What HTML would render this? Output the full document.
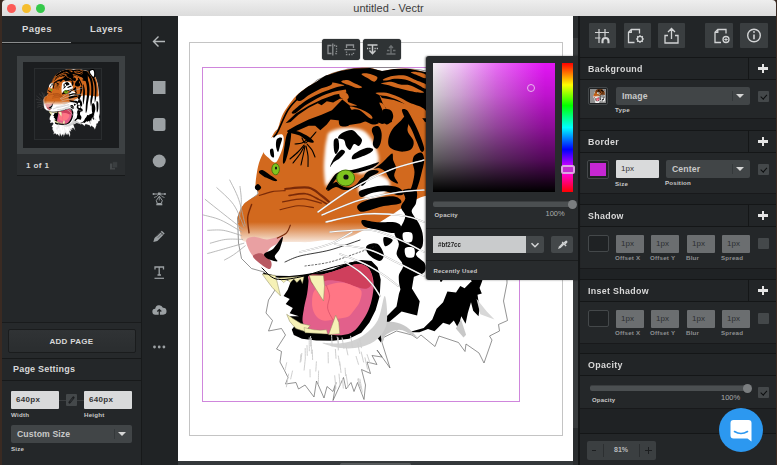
<!DOCTYPE html>
<html>
<head>
<meta charset="utf-8">
<title>untitled - Vectr</title>
<style>
*{box-sizing:border-box;margin:0;padding:0}
html,body{width:777px;height:465px;overflow:hidden;background:#2a2320;font-family:"Liberation Sans",sans-serif;}
#app{position:absolute;left:0;top:0;width:777px;height:465px;overflow:hidden;background:#3a2a22}
.abs{position:absolute}
#titlebar{left:2px;top:0;width:774px;height:16px;background:linear-gradient(#eeeeee,#dcdcdc);border-radius:4px 4px 0 0}
#title{left:0;top:0;width:777px;height:16px;line-height:16px;text-align:center;font-size:11px;color:#3c3c3c}
.tl{width:9px;height:9px;border-radius:50%;top:3.5px}
#left{left:2px;top:16px;width:139px;height:449px;background:#242729}
#tools{left:141px;top:16px;width:36.5px;height:449px;background:#202325;border-left:1.5px solid #17191a}
#canvas{left:177.500px;top:16px;width:395.500px;height:446px;background:#fff;overflow:hidden}
#vscroll{left:573px;top:16px;width:5px;height:449px;background:#2a2d2f}
#hscroll{left:178px;top:460.5px;width:395px;height:4.5px;background:#34383a}
#right{left:580px;top:16px;width:196px;height:449px;background:#1f2224}
.t{color:#d8d8d8;font-weight:bold;white-space:nowrap;position:absolute}
.lbl{color:#c8c8c8;font-weight:bold;font-size:6.2px;white-space:nowrap;position:absolute;letter-spacing:.2px;margin-top:-1px}
.hdr{left:0;width:196px;height:23px;background:#222527;border-top:1px solid #141617;border-bottom:1px solid #141617}
.hdr .t{left:8px;top:5px;font-size:9.5px;letter-spacing:.35px;transform:scaleX(.93);transform-origin:0 50%}
.hdr .sep{position:absolute;left:168px;top:0;width:1px;height:21px;background:#141617}
.hdr .plus{position:absolute;left:178px;top:5.5px;width:9.5px;height:9.5px}
.hdr .plus:before{content:"";position:absolute;left:0;top:3.5px;width:9.5px;height:2.5px;background:#e4e4e4}
.hdr .plus:after{content:"";position:absolute;left:3.5px;top:0;width:2.5px;height:9.5px;background:#e4e4e4}
.body{left:0;width:196px;background:#242729;border-bottom:1px solid #18191b}
.inp{background:#d9dadb;border-radius:1px;color:#333;font-size:8px;line-height:18px;padding-left:5px;font-weight:normal}
.inp.dis{background:#6b6e70;color:#2c2e30}
.sel{background:#414547;border-radius:2px;color:#c9c9c9;font-size:8.7px;font-weight:bold;line-height:18px;padding-left:6px;letter-spacing:.1px}
.sel:after{content:"";position:absolute;right:6px;top:7px;border:4px solid transparent;border-top:4.5px solid #d6d6d6;border-bottom:0}
.sel:before{content:"";position:absolute;right:17px;top:4px;width:1px;height:10px;background:#34383a}
.chk{width:11px;height:11px;background:#44484a;border-radius:1px}
.chk.on:after{content:"";position:absolute;left:3.8px;top:2px;width:2.6px;height:4.6px;border:solid #0c0e0f;border-width:0 1.8px 1.8px 0;transform:rotate(42deg)}
.sw{border:1.5px solid #44484a;border-radius:2px;background:#1f2224}
.tbtn{top:7px;width:27.5px;height:25px;background:#3a3e40;border-radius:1px}

.ftb{width:38px;height:21px;background:#2f3335;border-radius:3px;box-shadow:0 0 1px #1a1c1d}
#popup{z-index:5;left:425.5px;top:55.5px;width:154.5px;height:224.5px;background:#282b2d;border-radius:3px 0 0 3px;box-shadow:-1px 0 2px rgba(0,0,0,.5)}
#sv{left:7px;top:7.5px;width:122px;height:129px;background:linear-gradient(to top,#000 0%,rgba(0,0,0,.64) 25%,rgba(0,0,0,.38) 50%,rgba(0,0,0,.16) 75%,rgba(0,0,0,0) 100%),linear-gradient(to right,#f4f0f4 0%,#f1bff7 22%,#ea6cf6 52%,#e316f5 92%)}
#hue{left:136.5px;top:7.5px;width:10.6px;height:129px;background:linear-gradient(to bottom,#f00 0%,#ff0 17%,#0f0 33%,#0ff 50%,#00f 67%,#f0f 83%,#f00 100%)}
</style>
</head>
<body>
<div id="app">
  <div id="titlebar" class="abs"></div>
  <div id="title" class="abs">untitled - Vectr</div>
  <div class="abs tl" style="left:6.5px;background:#fc5b57"></div>
  <div class="abs tl" style="left:21.5px;background:#f5bd2e"></div>
  <div class="abs tl" style="left:35.5px;background:#35c94a"></div>

  <!-- LEFT PANEL -->
  <div id="left" class="abs">
    <div class="t" style="left:20px;top:7px;font-size:9.5px;letter-spacing:.4px">Pages</div>
    <div class="t" style="left:88px;top:7px;font-size:9.5px;letter-spacing:.4px">Layers</div>
    <div class="abs" style="left:0;top:26px;width:139px;height:2px;background:#17191a"></div>
    <div class="abs" style="left:0;top:26px;width:69px;height:1px;background:#8a8c8d"></div>
    <!-- thumbnail -->
    <div class="abs" style="left:15px;top:40px;width:108px;height:98px;background:#3d4143"></div>
    <div class="abs" style="left:21px;top:46px;width:96px;height:86px;background:#1b1d1f"></div>
    <div class="abs" style="left:32px;top:52px;width:68px;height:72px;border:1px solid #2a2d2f;background:#1d1f21"></div>
    <svg class="abs" style="left:0;top:0" width="139" height="160" viewBox="2 16 139 160"><use href="#tg" transform="translate(-6.050 55.560) scale(.2086 .2036)"/></svg>
    <div class="abs" style="left:15px;top:138px;width:108px;height:22px;background:#2a2d2f;border-bottom:1px solid #17191a"></div>
    <div class="t" style="left:24px;top:145px;font-size:8px;letter-spacing:.4px">1 of 1</div>
    <svg class="abs" style="left:107px;top:145px" width="10" height="10" viewBox="0 0 10 10"><rect x="1" y="2.500" width="5" height="6" fill="#45494b"/><rect x="3.500" y=".800" width="5" height="6" fill="#3a3e40" stroke="#2b2e30" stroke-width=".600"/></svg>
    <!-- add page -->
    <div class="abs" style="left:0;top:305.500px;width:139px;height:1px;background:#191b1c"></div>
    <div class="abs" style="left:0;top:306.500px;width:139px;height:36px;background:#26292b"></div>
    <div class="abs" style="left:5.500px;top:313px;width:128px;height:24px;background:linear-gradient(#303335,#2a2d2f);border:1px solid #1a1c1d;border-radius:2px"></div>
    <div class="t" style="left:0;top:320.500px;width:139px;text-align:center;font-size:8px;letter-spacing:.3px">ADD PAGE</div>
    <div class="abs" style="left:0;top:342px;width:139px;height:1px;background:#17191a"></div>
    <div class="t" style="left:11px;top:348px;font-size:9px;letter-spacing:.2px">Page Settings</div>
    <div class="abs" style="left:0;top:364px;width:139px;height:1px;background:#17191a"></div>
    <div class="abs inp" style="left:9px;top:375px;width:48px;height:18px;font-weight:bold;font-size:8px;letter-spacing:.3px">640px</div>
    <div class="abs inp" style="left:82px;top:375px;width:48px;height:18px;font-weight:bold;font-size:8px;letter-spacing:.3px">640px</div>
    <div class="abs" style="left:57px;top:384px;width:25px;height:1px;background:#3a3d3f"></div>
    <div class="abs" style="left:64px;top:378px;width:11px;height:12px;background:#44484a;border-radius:1px"></div>
    <svg class="abs" style="left:64px;top:378px" width="11" height="12" viewBox="0 0 11 12"><path d="M3.500 8.500l4-5" stroke="#1c1e20" stroke-width="2.200" stroke-linecap="round" fill="none"/><path d="M4.200 7.600l2.600-3.200" stroke="#44484a" stroke-width=".700" fill="none"/></svg>
    <div class="lbl" style="left:9px;top:396px">Width</div>
    <div class="lbl" style="left:82px;top:396px">Height</div>
    <div class="abs sel" style="left:9px;top:409px;width:121px;height:18px">Custom Size</div>
    <div class="lbl" style="left:9px;top:430px">Size</div>
  </div>

  <!-- TOOLS -->
  <div id="tools" class="abs">
    <svg class="abs" style="left:-1.500px;top:0" width="37" height="449" viewBox="141 16 37 449" fill="none" stroke="#9ca1a4" stroke-width="1.300">
      <path d="M165 41.500h-11.500M158.500 36.500l-5 5 5 5" stroke-width="1.400" stroke="#b4b8ba"/>
      <rect x="153" y="81" width="12.500" height="13" fill="#9ca1a4" stroke="none"/>
      <rect x="153" y="118" width="12.500" height="13" rx="2.500" fill="#9ca1a4" stroke="none"/>
      <circle cx="159.200" cy="161" r="6.500" fill="#9ca1a4" stroke="none"/>
      <!-- pen tool -->
      <path d="M153.500 194h11.500" stroke-width="1"/><circle cx="153.500" cy="194" r="1" fill="#9ca1a4" stroke="none"/><circle cx="165" cy="194" r="1" fill="#9ca1a4" stroke="none"/><rect x="158" y="192.500" width="2.600" height="2.600" fill="#9ca1a4" stroke="none"/>
      <path d="M154 197.500q3-.5 4.500-3M164.500 197.500q-3-.5-4.500-3" stroke-width=".8"/>
      <path d="M159.300 196.200l3 4.300-1 3h-4l-1-3z" stroke-width="1"/><path d="M159.300 197v3.500" stroke-width=".8"/><rect x="156.300" y="203.500" width="6" height="1.800" fill="#9ca1a4" stroke="none"/>
      <!-- pencil -->
      <path d="M153.300 242l1.200-4 7.300-7.300 2.900 2.900-7.300 7.300z" fill="#9ca1a4" stroke="none"/><path d="M160.500 232l2.800 2.800" stroke="#1e2123" stroke-width=".9"/><path d="M156.500 236.500l4.500-4.500M157.800 237.800l4.500-4.500" stroke="#1e2123" stroke-width=".5"/>
      <!-- text -->
      <path d="M155 269.500v-2.500h8.500v2.500M159.200 267v8M157.500 275h3.500" stroke-width="1.300"/><path d="M154.500 278.300h9.500" stroke-width="1.200"/>
      <!-- cloud upload -->
      <g transform="translate(0 -.8)"><path d="M156 315.500h-.5a3 3 0 0 1-.3-6 4 4 0 0 1 7.700-1 3.500 3.500 0 0 1 .3 7h-.7z" fill="#9ca1a4" stroke="none"/><path d="M159.300 316v-5M157.300 312.300l2-2 2 2" stroke="#1e2123" stroke-width="1.200"/></g>
      <!-- dots -->
      <circle cx="154.500" cy="347" r="1.400" fill="#9ca1a4" stroke="none"/><circle cx="159.200" cy="347" r="1.400" fill="#9ca1a4" stroke="none"/><circle cx="163.900" cy="347" r="1.400" fill="#9ca1a4" stroke="none"/>
    </svg>
  </div>

  <!-- CANVAS -->
  <div id="canvas" class="abs">
    <div class="abs" style="left:11.500px;top:26px;width:374px;height:394px;border:1px solid #c4c4c4"></div>
    <div class="abs" style="left:24.500px;top:51px;width:318px;height:335px;border:1px solid #cf86dc"></div>
<svg class="abs" style="left:-177.500px;top:-16px" width="777" height="465" viewBox="0 0 777 465">
<defs>
<linearGradient id="gor" gradientUnits="userSpaceOnUse" x1="0" y1="222" x2="0" y2="246"><stop offset="0" stop-color="#d2691e"/><stop offset="1" stop-color="#fff"/></linearGradient>
<filter id="bl1" x="-20%" y="-20%" width="140%" height="140%"><feGaussianBlur stdDeviation="1.6"/></filter>
<filter id="bl2" x="-20%" y="-20%" width="140%" height="140%"><feGaussianBlur stdDeviation="0.5"/></filter>
</defs>
<g id="tg">
<path fill="#fff" stroke="#666" stroke-width="0.7" stroke-linejoin="round" d="M268.0 148.0 L279.0 145.0 L283.0 127.0 L292.0 106.0 L305.0 91.0 L317.0 80.0 L333.0 73.0 L348.0 69.0 L369.0 67.5 L395.0 67.5 L421.0 70.0 L450.0 76.0 L470.0 88.0 L488.0 108.0 L498.0 140.0 L503.0 180.0 L506.0 230.0 L507.0 283.0 L503.5 301.0 L507.5 320.5 L498.5 324.5 L499.5 331.0 L489.5 336.0 L492.0 340.0 L484.0 363.0 L479.0 353.0 L466.0 344.0 L465.0 351.5 L458.5 342.5 L439.0 336.0 L435.0 346.5 L421.0 335.0 L417.0 338.5 L412.0 335.0 L396.5 331.0 L383.5 337.5 L382.0 342.5 L390.0 368.0 L377.0 350.0 L382.0 357.0 L372.0 355.5 L377.0 364.5 L367.0 362.0 L370.5 373.5 L361.5 369.5 L365.5 385.0 L364.0 399.5 L357.5 382.5 L354.0 391.5 L351.0 382.5 L346.0 389.0 L343.5 377.5 L333.0 400.5 L336.0 382.5 L333.0 391.5 L327.0 386.5 L324.0 398.0 L316.5 381.0 L314.0 397.0 L305.0 385.0 L298.5 389.0 L296.0 382.5 L285.5 384.0 L288.0 377.5 L284.0 369.5 L280.0 362.0 L281.5 351.5 L276.5 349.0 L285.5 335.0 L281.5 328.5 L268.5 331.0 L272.5 320.5 L266.0 313.0 L268.5 300.0 L275.0 290.0 L264.0 272.0 L251.5 268.5 L241.5 258.5 L238.5 243.0 L237.5 217.5 L244.0 204.5 L258.0 194.0 L257.0 187.5 L258.5 173.5 L262.0 160.0Z"/>
<path fill="url(#gor)" d="M278.0 128.0 C279.3 125.2 280.3 119.7 282.0 116.0 C283.7 112.3 285.7 109.3 288.0 106.0 C290.3 102.7 293.0 99.0 296.0 96.0 C299.0 93.0 302.7 90.3 306.0 88.0 C309.3 85.7 312.3 84.2 316.0 82.0 C319.7 79.8 324.0 76.8 328.0 75.0 C332.0 73.2 335.7 72.1 340.0 71.0 C344.3 69.9 349.0 68.9 354.0 68.4 C359.0 67.9 365.3 67.6 370.0 68.0 C374.7 68.4 378.0 70.8 382.0 71.0 C386.0 71.2 389.3 69.3 394.0 69.0 C398.7 68.7 404.8 68.5 410.0 69.0 C415.2 69.5 418.3 70.7 425.0 72.0 C431.7 73.3 442.5 74.2 450.0 77.0 C457.5 79.8 463.8 83.7 470.0 89.0 C476.2 94.3 482.7 100.5 487.0 109.0 C491.3 117.5 493.8 128.2 496.0 140.0 C498.2 151.8 499.3 170.0 500.0 180.0 C500.7 190.0 505.0 197.2 500.0 200.0 C495.0 202.8 479.2 197.7 470.0 197.0 C460.8 196.3 452.5 196.2 445.0 196.0 C437.5 195.8 430.8 194.8 425.0 196.0 C419.2 197.2 414.8 200.3 410.0 203.0 C405.2 205.7 400.2 209.3 396.0 212.0 C391.8 214.7 388.5 216.8 385.0 219.0 C381.5 221.2 378.8 223.0 375.0 225.0 C371.2 227.0 365.8 229.2 362.0 231.0 C358.2 232.8 356.0 234.5 352.0 236.0 C348.0 237.5 342.5 239.3 338.0 240.0 C333.5 240.7 329.7 239.7 325.0 240.0 C320.3 240.3 314.8 241.7 310.0 242.0 C305.2 242.3 300.5 242.0 296.0 242.0 C291.5 242.0 291.3 242.0 283.0 242.0 C274.7 242.0 253.2 243.7 246.0 242.0 C238.8 240.3 241.3 236.2 240.0 232.0 C238.7 227.8 237.3 221.7 238.0 217.0 C238.7 212.3 240.7 207.8 244.0 204.0 C247.3 200.2 256.1 196.8 258.0 194.0 C259.9 191.2 255.7 190.7 255.5 187.0 C255.3 183.3 256.2 176.5 257.0 172.0 C257.8 167.5 258.4 164.2 260.0 160.0 C261.6 155.8 264.2 151.5 266.5 147.0 C268.8 142.5 272.1 136.2 274.0 133.0 C275.9 129.8 276.7 130.8 278.0 128.0Z"/>
<path fill="#fff" filter="url(#bl1)" d="M330.0 132.0 C332.8 130.3 338.7 128.3 344.0 128.0 C349.3 127.7 357.3 128.0 362.0 130.0 C366.7 132.0 369.3 136.0 372.0 140.0 C374.7 144.0 377.0 150.2 378.0 154.0 C379.0 157.8 379.0 160.3 378.0 163.0 C377.0 165.7 374.7 168.2 372.0 170.0 C369.3 171.8 365.0 173.7 362.0 174.0 C359.0 174.3 358.0 172.0 354.0 172.0 C350.0 172.0 342.0 172.3 338.0 174.0 C334.0 175.7 332.0 180.0 330.0 182.0 C328.0 184.0 327.0 188.0 326.0 186.0 C325.0 184.0 324.2 176.0 324.0 170.0 C323.8 164.0 324.5 155.3 325.0 150.0 C325.5 144.7 326.2 141.0 327.0 138.0 C327.8 135.0 327.2 133.7 330.0 132.0Z"/>
<path fill="#fff" filter="url(#bl1)" d="M362.0 180.0 C364.7 177.7 370.0 174.3 374.0 174.0 C378.0 173.7 383.3 176.0 386.0 178.0 C388.7 180.0 390.7 183.0 390.0 186.0 C389.3 189.0 385.3 193.7 382.0 196.0 C378.7 198.3 373.3 200.0 370.0 200.0 C366.7 200.0 364.0 198.0 362.0 196.0 C360.0 194.0 358.0 190.7 358.0 188.0 C358.0 185.3 359.3 182.3 362.0 180.0Z"/>
<path fill="#fff" filter="url(#bl2)" d="M271.7 137.4 C274.3 135.9 280.4 133.2 282.3 134.5 C284.2 135.8 284.0 141.1 283.3 145.2 C282.6 149.2 279.8 155.9 278.4 158.8 C276.9 161.7 276.2 162.6 274.6 162.5 C273.0 162.4 270.7 159.8 268.8 158.0 C266.9 156.2 263.9 154.4 263.5 152.0 C263.1 149.6 265.1 145.7 266.5 143.3 C267.9 140.9 269.1 138.9 271.7 137.4Z"/>
<path fill="#000" d="M328.0 75.0 L340.0 71.0 L354.0 68.4 L370.0 68.0 L382.0 71.0 L394.0 69.0 L410.0 69.0 L425.0 72.0 L450.0 78.0 L450.0 128.0 L425.0 122.0 L418.0 112.0 L408.0 105.0 L394.0 100.0 L382.0 98.0 L379.0 94.0 L383.0 104.0 L390.0 114.0 L392.0 122.0 L382.0 124.0 L372.0 120.0 L364.0 112.0 L356.0 105.0 L348.0 102.0 L347.0 97.0 L346.0 90.0 L344.0 85.0 L336.0 83.0 L330.0 82.0Z"/>
<path fill="#000" d="M296.0 97.0 C297.0 94.8 302.7 90.5 306.0 88.0 C309.3 85.5 312.3 84.2 316.0 82.0 C319.7 79.8 325.3 74.7 328.0 75.0 C330.7 75.3 333.3 81.7 332.0 84.0 C330.7 86.3 323.8 87.2 320.0 89.0 C316.2 90.8 312.3 93.0 309.0 95.0 C305.7 97.0 302.2 100.7 300.0 101.0 C297.8 101.3 295.0 99.2 296.0 97.0Z"/>
<path fill="none" stroke="#000" stroke-width="1.6" stroke-linecap="round" d="M273.9 136.8 C274.5 135.9 275.4 136.1 277.7 131.6 C280.1 127.1 284.4 115.5 288.1 109.7 C291.7 103.9 295.6 100.4 299.7 96.8 C303.8 93.1 308.9 90.1 312.6 87.7 C316.2 85.4 319.2 83.9 321.6 82.6 C324.0 81.3 325.9 80.4 326.8 80.0"/>
<path fill="#000" d="M291.9 112.3 C293.0 110.6 298.4 106.0 302.3 103.2 C306.1 100.4 310.9 97.6 315.2 95.5 C319.5 93.3 324.4 91.7 328.1 90.3 C331.7 88.9 333.9 88.0 337.1 87.1 C340.3 86.2 345.7 84.8 347.4 85.2 C349.1 85.5 349.1 88.1 347.4 89.0 C345.7 90.0 340.3 90.2 337.1 91.0 C333.9 91.7 331.5 92.3 328.1 93.5 C324.6 94.8 320.3 96.7 316.5 98.7 C312.6 100.8 308.3 103.4 304.8 105.8 C301.4 108.2 298.0 111.8 295.8 112.9 C293.7 114.0 290.9 113.9 291.9 112.3Z"/>
<path fill="#000" d="M285.5 123.2 L295.8 113.5 L308.7 105.8 L321.6 99.4 L334.5 94.8 L348.7 92.3 L350.0 97.4 L339.7 98.7 L333.2 102.6 L326.8 101.3 L321.6 105.2 L317.7 103.2 L308.7 107.7 L298.4 114.8 L290.6 121.9Z"/>
<path fill="#000" d="M342.3 99.4 L331.9 110.3 L321.6 114.8 L308.7 119.4 L295.8 125.8 L286.8 131.0 L289.4 133.5 L298.4 130.3 L308.7 125.8 L315.2 125.8 L320.3 130.3 L326.8 124.5 L330.6 119.4 L339.7 120.6 L347.4 125.2 L360.3 123.2 L370.0 119.4 L370.0 105.8 L350.0 105.8Z"/>
<path fill="#d2691e" d="M350.0 106.5 C351.1 105.9 357.0 107.7 360.3 109.0 C363.7 110.3 368.1 112.6 370.0 114.2 C371.9 115.8 373.5 118.2 371.9 118.7 C370.3 119.2 363.3 118.5 360.3 117.4 C357.3 116.3 355.6 114.1 353.9 112.3 C352.2 110.4 348.9 107.0 350.0 106.5Z"/>
<path fill="#000" d="M289.4 129.7 C290.6 129.5 295.2 130.4 298.4 131.6 C301.6 132.8 306.1 135.1 308.7 136.8 C311.3 138.5 313.9 141.1 313.9 141.9 C313.9 142.8 311.1 143.0 308.7 141.9 C306.3 140.9 302.7 137.0 299.7 135.5 C296.7 134.0 292.4 133.9 290.6 132.9 C288.9 131.9 288.1 129.9 289.4 129.7Z"/>
<path fill="#d2691e" d="M341.2 81.7 C340.8 80.9 344.8 79.8 347.0 80.0 C349.1 80.2 351.4 81.7 353.9 82.9 C356.5 84.1 361.5 86.1 362.1 87.0 C362.6 87.8 359.6 88.4 357.4 88.1 C355.3 87.8 352.0 86.3 349.3 85.2 C346.6 84.2 341.5 82.6 341.2 81.7Z"/>
<path fill="#d2691e" d="M361.5 74.2 C361.5 73.4 365.3 73.1 367.9 73.6 C370.5 74.1 376.1 75.7 377.2 77.1 C378.2 78.5 375.8 81.6 374.3 81.7 C372.7 81.9 370.0 79.5 367.9 78.3 C365.7 77.0 361.5 75.0 361.5 74.2Z"/>
<path fill="#d2691e" d="M340.0 91.6 C341.2 91.0 345.5 92.3 347.0 93.4 C348.4 94.4 349.1 97.0 348.7 98.0 C348.3 99.0 346.1 99.4 344.6 99.2 C343.2 99.0 340.8 98.1 340.0 96.8 C339.2 95.6 338.8 92.2 340.0 91.6Z"/>
<path fill="#d2691e" d="M383.0 79.4 C383.9 78.6 388.6 76.6 392.3 75.9 C395.9 75.3 401.4 74.8 405.0 75.4 C408.7 75.9 410.9 78.0 414.3 79.4 C417.7 80.9 423.5 82.5 425.4 84.1 C427.2 85.6 427.0 88.8 425.4 88.7 C423.7 88.6 418.9 85.0 415.5 83.5 C412.1 81.9 408.5 80.2 405.0 79.4 C401.6 78.6 397.7 78.6 394.6 78.8 C391.5 79.0 388.4 80.5 386.5 80.6 C384.5 80.7 382.0 80.2 383.0 79.4Z"/>
<path fill="#d2691e" d="M381.2 83.5 C381.6 82.9 387.9 81.6 391.1 81.7 C394.3 81.9 397.3 84.1 400.4 84.6 C403.5 85.2 405.9 84.1 409.7 85.2 C413.5 86.4 421.1 90.4 423.0 91.6 C425.0 92.9 423.5 92.9 421.3 92.8 C419.1 92.7 413.6 91.8 409.7 91.0 C405.8 90.3 401.6 89.1 398.1 88.1 C394.6 87.2 391.6 86.0 388.8 85.2 C386.0 84.5 380.8 84.1 381.2 83.5Z"/>
<path fill="#d2691e" d="M410.8 72.5 C410.7 71.9 414.2 71.6 416.7 71.9 C419.1 72.2 423.9 73.1 425.4 74.2 C426.8 75.3 426.6 78.1 425.4 78.3 C424.1 78.5 420.2 76.3 417.8 75.4 C415.4 74.4 411.0 73.0 410.8 72.5Z"/>
<path fill="#d2691e" d="M376.0 92.8 C377.2 92.4 382.8 92.1 386.5 92.8 C390.1 93.5 394.2 95.2 398.1 96.8 C401.9 98.5 405.4 100.7 409.7 102.7 C413.9 104.6 420.5 105.9 423.6 108.5 C426.7 111.0 430.2 116.5 428.3 117.7 C426.3 119.0 415.1 117.6 412.0 116.0 C408.9 114.5 411.6 110.9 409.7 108.5 C407.8 106.0 403.9 103.4 400.4 101.5 C396.9 99.6 392.3 97.9 388.8 96.8 C385.3 95.8 381.6 95.8 379.5 95.1 C377.4 94.4 374.8 93.2 376.0 92.8Z"/>
<path fill="#d2691e" d="M379.5 102.7 C379.9 102.1 383.0 103.6 384.1 105.0 C385.3 106.3 385.9 108.9 386.5 110.8 C387.0 112.6 388.0 115.1 387.6 116.0 C387.2 116.9 385.1 117.3 384.1 116.0 C383.2 114.7 382.6 110.7 381.8 108.5 C381.0 106.2 379.1 103.2 379.5 102.7Z"/>
<path fill="#d2691e" d="M398.7 108.5 C398.8 107.6 400.5 109.5 401.6 110.8 C402.6 112.0 405.2 115.1 405.0 116.0 C404.8 116.9 401.5 117.3 400.4 116.0 C399.3 114.7 398.5 109.3 398.7 108.5Z"/>
<path fill="#000" d="M340.0 116.8 C341.6 115.2 347.7 116.9 349.7 115.8 C351.6 114.7 350.0 111.0 351.6 110.0 C353.2 109.0 356.5 108.7 359.4 110.0 C362.3 111.3 365.8 115.6 369.0 117.7 C372.3 119.8 378.1 121.5 378.7 122.6 C379.4 123.7 375.8 125.0 372.9 124.5 C370.0 124.0 364.8 120.8 361.3 119.7 C357.7 118.5 353.7 116.8 351.6 117.7 C349.5 118.7 350.6 124.2 348.7 125.5 C346.8 126.8 341.5 126.9 340.0 125.5 C338.5 124.0 338.4 118.4 340.0 116.8Z"/>
<path fill="#000" d="M372.9 127.4 C374.0 126.6 377.3 125.5 378.7 126.5 C380.2 127.4 381.3 130.5 381.6 133.2 C381.9 136.0 381.4 140.3 380.6 142.9 C379.8 145.5 378.1 148.4 376.8 148.7 C375.5 149.0 373.4 146.8 372.9 144.8 C372.4 142.9 374.0 139.4 373.9 137.1 C373.7 134.8 372.1 132.9 371.9 131.3 C371.8 129.7 371.8 128.2 372.9 127.4Z"/>
<path fill="#000" d="M392.3 129.4 C394.2 126.5 397.7 123.9 400.0 121.6 C402.3 119.4 404.4 115.8 405.8 115.8 C407.3 115.8 408.4 119.0 408.7 121.6 C409.0 124.2 406.9 128.1 407.7 131.3 C408.5 134.5 412.9 138.1 413.5 141.0 C414.2 143.9 413.2 146.9 411.6 148.7 C410.0 150.5 406.4 151.3 403.9 151.6 C401.3 151.9 398.5 151.4 396.1 150.6 C393.7 149.8 390.6 148.7 389.4 146.8 C388.1 144.8 387.9 141.9 388.4 139.0 C388.9 136.1 390.3 132.3 392.3 129.4Z"/>
<path fill="#000" d="M401.9 110.0 C402.1 108.4 405.2 108.7 406.8 110.0 C408.4 111.3 409.8 114.5 411.6 117.7 C413.4 121.0 415.8 125.8 417.4 129.4 C419.0 132.9 420.2 135.8 421.3 139.0 C422.4 142.3 424.2 146.6 424.2 148.7 C424.2 150.8 422.6 152.9 421.3 151.6 C420.0 150.3 418.1 144.7 416.4 141.0 C414.8 137.3 413.4 132.9 411.6 129.4 C409.8 125.8 407.4 122.9 405.8 119.7 C404.2 116.5 401.8 111.6 401.9 110.0Z"/>
<path fill="#000" d="M382.6 110.0 C383.7 108.4 388.5 109.0 390.3 110.0 C392.1 111.0 393.1 113.9 393.2 115.8 C393.4 117.7 392.4 120.2 391.3 121.6 C390.2 123.1 387.7 124.8 386.4 124.5 C385.2 124.2 384.2 122.1 383.5 119.7 C382.9 117.3 381.4 111.6 382.6 110.0Z"/>
<path fill="#000" d="M414.5 155.5 C416.0 153.9 419.7 151.8 421.3 152.6 C422.9 153.4 424.2 156.8 424.2 160.3 C424.2 163.9 422.4 169.4 421.3 173.9 C420.2 178.4 418.7 183.9 417.4 187.4 C416.1 191.0 414.8 194.2 413.5 195.2 C412.3 196.1 409.8 195.2 409.7 193.2 C409.5 191.3 411.8 187.1 412.6 183.5 C413.4 180.0 414.5 175.5 414.5 171.9 C414.5 168.4 412.6 165.0 412.6 162.3 C412.6 159.5 413.1 157.1 414.5 155.5Z"/>
<path fill="#000" d="M386.4 158.4 C388.2 156.8 391.1 153.2 392.3 153.5 C393.4 153.9 392.6 157.9 393.2 160.3 C393.9 162.7 396.0 165.5 396.1 168.1 C396.3 170.6 393.9 173.2 394.2 175.8 C394.5 178.4 398.7 182.9 398.1 183.5 C397.4 184.2 392.4 181.6 390.3 179.7 C388.2 177.7 387.4 173.9 385.5 171.9 C383.5 170.0 380.6 168.5 378.7 168.1 C376.8 167.6 373.4 169.8 373.9 169.0 C374.4 168.2 379.5 165.0 381.6 163.2 C383.7 161.4 384.7 160.0 386.4 158.4Z"/>
<path fill="#000" d="M365.2 173.9 C367.1 171.3 370.6 170.3 372.9 170.0 C375.2 169.7 379.4 170.6 378.7 171.9 C378.1 173.2 371.3 175.8 369.0 177.7 C366.8 179.7 366.4 182.3 365.2 183.5 C363.9 184.8 361.3 187.1 361.3 185.5 C361.3 183.9 363.2 176.4 365.2 173.9Z"/>
<path fill="#000" d="M359.4 191.3 C361.0 189.7 366.8 188.4 371.0 187.4 C375.2 186.4 380.0 185.5 384.5 185.5 C389.0 185.5 394.8 186.1 398.1 187.4 C401.3 188.7 403.9 191.9 403.9 193.2 C403.9 194.5 401.3 195.5 398.1 195.2 C394.8 194.8 389.0 191.6 384.5 191.3 C380.0 191.0 374.8 192.3 371.0 193.2 C367.1 194.2 363.2 197.4 361.3 197.1 C359.4 196.8 357.7 192.9 359.4 191.3Z"/>
<path fill="#000" d="M403.1 190.0 C404.9 188.6 413.9 187.8 416.0 190.0 C418.2 192.2 416.7 199.3 416.0 202.9 C415.3 206.5 411.4 208.3 411.7 211.5 C412.1 214.7 416.4 218.7 418.2 222.3 C420.0 225.8 421.8 229.1 422.5 233.0 C423.2 237.0 423.5 242.3 422.5 245.9 C421.4 249.5 415.7 251.6 416.0 254.5 C416.4 257.4 423.2 260.3 424.6 263.1 C426.1 266.0 426.1 269.6 424.6 271.7 C423.2 273.9 419.2 274.6 416.0 276.0 C412.8 277.5 406.7 278.0 405.3 280.3 C403.8 282.7 408.1 288.4 407.4 290.0 C406.7 291.6 402.4 292.3 401.0 290.0 C399.5 287.7 398.5 280.1 398.8 276.0 C399.2 271.9 403.5 268.9 403.1 265.3 C402.8 261.7 397.4 258.1 396.7 254.5 C395.9 250.9 399.2 247.3 398.8 243.8 C398.5 240.2 394.2 235.9 394.5 233.0 C394.9 230.1 399.2 229.4 401.0 226.6 C402.8 223.7 405.3 219.0 405.3 215.8 C405.3 212.6 401.0 210.1 401.0 207.2 C401.0 204.3 404.9 201.5 405.3 198.6 C405.6 195.7 401.3 191.4 403.1 190.0Z"/>
<path fill="#000" d="M358.0 205.1 C360.1 202.9 366.9 200.0 373.0 198.6 C379.1 197.2 389.9 195.7 394.5 196.5 C399.2 197.2 402.8 201.3 401.0 202.9 C399.2 204.5 389.1 204.9 383.8 206.1 C378.4 207.4 372.7 209.5 368.7 210.4 C364.8 211.3 361.9 212.4 360.1 211.5 C358.3 210.6 355.8 207.2 358.0 205.1Z"/>
<path fill="#000" d="M362.3 220.1 C364.4 219.4 371.9 221.9 377.3 222.3 C382.7 222.6 390.6 221.5 394.5 222.3 C398.5 223.0 401.0 224.8 401.0 226.6 C401.0 228.4 398.5 232.5 394.5 233.0 C390.6 233.5 382.3 230.9 377.3 229.8 C372.3 228.7 366.9 228.2 364.4 226.6 C361.9 224.9 360.1 220.8 362.3 220.1Z"/>
<path fill="#000" d="M366.6 245.9 C368.0 244.1 374.4 242.3 377.3 243.8 C380.2 245.2 383.4 251.6 383.8 254.5 C384.1 257.4 382.0 261.0 379.5 261.0 C377.0 261.0 370.9 257.0 368.7 254.5 C366.6 252.0 365.1 247.7 366.6 245.9Z"/>
<path fill="#000" d="M383.8 237.3 C385.0 236.2 391.3 238.4 392.4 239.5 C393.4 240.5 391.5 242.7 390.2 243.8 C389.0 244.8 385.9 247.0 384.8 245.9 C383.8 244.8 382.5 238.4 383.8 237.3Z"/>
<path fill="#fff" d="M403.1 233.0 C404.4 231.6 410.3 231.6 411.7 233.0 C413.2 234.4 413.0 240.2 411.7 241.6 C410.5 243.0 405.6 243.0 404.2 241.6 C402.8 240.2 401.9 234.4 403.1 233.0Z"/>
<path fill="#fff" d="M405.3 248.1 C406.5 246.6 412.4 246.6 413.9 248.1 C415.3 249.5 415.1 255.2 413.9 256.7 C412.6 258.1 407.8 258.1 406.3 256.7 C404.9 255.2 404.0 249.5 405.3 248.1Z"/>
<path fill="#000" d="M401.6 260.0 L405.5 275.5 L399.0 293.5 L396.5 306.5 L383.5 319.4 L377.1 337.4 L381.0 342.6 L386.1 324.5 L401.6 311.6 L417.1 315.5 L419.7 301.3 L411.9 288.4 L414.5 272.9 L413.2 260.0Z"/>
<path fill="#000" d="M408.7 332.3 L423.7 328.0 L432.3 319.4 L436.6 308.7 L443.1 302.2 L447.4 291.5 L456.0 292.6 L460.3 286.1 L464.6 288.3 L471.0 281.8 L477.5 282.9 L481.8 293.6 L477.5 294.7 L479.6 308.7 L478.5 316.2 L473.2 310.8 L471.0 302.2 L467.8 313.0 L465.6 323.7 L461.3 316.2 L458.1 328.0 L453.8 320.5 L449.5 324.8 L443.1 322.7 L434.5 331.3 L428.0 329.1 L419.4 332.3Z"/>
<path fill="#c8c8c8" d="M381.0 324.5 C382.9 321.1 389.6 321.5 393.9 321.9 C398.2 322.4 402.9 324.5 406.8 327.1 C410.6 329.7 416.2 336.1 417.1 337.4 C418.0 338.7 414.9 336.1 411.9 334.8 C408.9 333.5 403.3 329.7 399.0 329.7 C394.7 329.7 388.9 332.7 386.1 334.8 C383.3 337.0 383.1 344.3 382.3 342.6 C381.4 340.9 379.0 328.0 381.0 324.5Z"/>
<path fill="#c8c8c8" d="M455.8 328.4 L461.0 319.4 L466.1 334.8 L463.5 337.4Z"/>
<path fill="#d8d8d8" d="M480.3 314.2 L476.5 298.7 L486.8 311.6 L494.5 319.4Z"/>
<path fill="#000" d="M342.0 133.0 C344.3 131.7 349.3 129.7 352.0 130.0 C354.7 130.3 356.3 133.3 358.0 135.0 C359.7 136.7 361.8 138.2 362.0 140.0 C362.2 141.8 360.3 145.3 359.0 146.0 C357.7 146.7 355.5 143.3 354.0 144.0 C352.5 144.7 351.3 149.7 350.0 150.0 C348.7 150.3 347.0 147.7 346.0 146.0 C345.0 144.3 345.3 141.3 344.0 140.0 C342.7 138.7 338.3 139.2 338.0 138.0 C337.7 136.8 339.7 134.3 342.0 133.0Z"/>
<path fill="#000" d="M334.0 140.0 C334.7 138.2 337.2 137.7 338.0 139.0 C338.8 140.3 339.3 145.5 339.0 148.0 C338.7 150.5 336.8 153.7 336.0 154.0 C335.2 154.3 334.3 152.3 334.0 150.0 C333.7 147.7 333.3 141.8 334.0 140.0Z"/>
<path fill="#000" d="M341.0 150.0 C342.8 149.0 345.2 150.7 345.0 152.0 C344.8 153.3 341.8 156.3 340.0 158.0 C338.2 159.7 335.7 160.5 334.0 162.0 C332.3 163.5 330.0 167.7 330.0 167.0 C330.0 166.3 332.2 160.8 334.0 158.0 C335.8 155.2 339.2 151.0 341.0 150.0Z"/>
<path fill="#000" d="M354.0 154.0 C356.3 152.2 362.8 148.8 366.0 148.0 C369.2 147.2 372.3 148.2 373.0 149.0 C373.7 149.8 372.5 151.5 370.0 153.0 C367.5 154.5 361.0 157.0 358.0 158.0 C355.0 159.0 352.7 159.7 352.0 159.0 C351.3 158.3 351.7 155.8 354.0 154.0Z"/>
<path fill="#000" d="M277.0 139.0 C278.0 137.7 281.5 136.8 282.0 138.0 C282.5 139.2 280.7 143.7 280.0 146.0 C279.3 148.3 278.7 152.0 278.0 152.0 C277.3 152.0 276.2 148.2 276.0 146.0 C275.8 143.8 276.0 140.3 277.0 139.0Z"/>
<path fill="#000" d="M270.0 150.0 C270.3 148.8 272.3 147.8 273.0 149.0 C273.7 150.2 274.3 155.8 274.0 157.0 C273.7 158.2 271.7 157.2 271.0 156.0 C270.3 154.8 269.7 151.2 270.0 150.0Z"/>
<path fill="#000" d="M287.0 134.0 C288.2 131.0 290.5 130.3 291.0 132.0 C291.5 133.7 290.8 139.3 290.0 144.0 C289.2 148.7 287.2 156.8 286.0 160.0 C284.8 163.2 283.3 164.7 283.0 163.0 C282.7 161.3 283.3 154.8 284.0 150.0 C284.7 145.2 285.8 137.0 287.0 134.0Z"/>
<path fill="#000" d="M259.0 172.4 C258.4 171.1 260.6 169.6 262.4 170.0 C264.2 170.4 267.6 173.3 270.0 175.0 C272.4 176.7 276.3 179.0 277.0 180.0 C277.7 181.0 276.2 181.4 274.4 181.0 C272.6 180.6 268.6 179.0 266.0 177.6 C263.4 176.2 259.6 173.7 259.0 172.4Z"/>
<path fill="#000" d="M255.0 186.4 C255.4 185.5 257.0 183.8 258.0 184.0 C259.0 184.2 261.1 186.5 261.2 187.6 C261.3 188.7 259.3 190.1 258.4 190.4 C257.5 190.7 256.2 189.9 255.6 189.2 C255.0 188.5 254.6 187.3 255.0 186.4Z"/>
<path fill="#000" d="M326.0 189.0 C326.2 187.7 329.0 182.8 331.0 180.0 C333.0 177.2 334.2 174.1 338.0 172.4 C341.8 170.7 348.7 170.8 354.0 169.6 C359.3 168.4 365.8 166.2 370.0 165.0 C374.2 163.8 378.7 161.9 379.0 162.4 C379.3 162.9 375.5 166.3 372.0 168.0 C368.5 169.7 362.7 171.5 358.0 172.4 C353.3 173.3 347.7 172.5 344.0 173.6 C340.3 174.7 338.3 176.6 336.0 179.0 C333.7 181.4 331.7 186.3 330.0 188.0 C328.3 189.7 325.8 190.3 326.0 189.0Z"/>
<path fill="#000" d="M329.0 187.0 C330.3 185.5 334.2 182.3 336.0 182.0 C337.8 181.7 338.0 184.1 340.0 185.0 C342.0 185.9 345.3 187.7 348.0 187.6 C350.7 187.5 353.7 186.0 356.0 184.4 C358.3 182.8 359.7 179.4 362.0 178.0 C364.3 176.6 370.0 175.0 370.0 176.0 C370.0 177.0 364.7 181.8 362.0 184.0 C359.3 186.2 357.0 188.0 354.0 189.0 C351.0 190.0 347.0 190.3 344.0 190.0 C341.0 189.7 338.7 186.8 336.0 187.0 C333.3 187.2 329.2 191.0 328.0 191.0 C326.8 191.0 327.7 188.5 329.0 187.0Z"/>
<ellipse cx="345.6" cy="178" rx="9" ry="8" fill="#7fc41e" stroke="#3f6e0c" stroke-width="1"/>
<circle cx="346" cy="177" r="2.6" fill="#111"/>
<ellipse cx="275.6" cy="169.2" rx="3.8" ry="5.6" fill="#7fc41e" stroke="#3f6e0c" stroke-width=".8"/>
<ellipse cx="276" cy="168" rx="1" ry="1.6" fill="#111"/>
<path fill="none" stroke="#000" stroke-width="1.1" stroke-linecap="round" d="M304.0 145.0 C303.0 146.2 300.3 149.7 298.0 152.0 C295.7 154.3 291.3 157.8 290.0 159.0"/>
<path fill="none" stroke="#000" stroke-width="1.1" stroke-linecap="round" d="M304.4 146.0 C303.7 147.3 301.9 151.2 300.0 154.0 C298.1 156.8 294.2 161.5 293.0 163.0"/>
<path fill="none" stroke="#000" stroke-width="1.1" stroke-linecap="round" d="M305.0 146.0 C304.7 147.7 303.7 152.8 303.0 156.0 C302.3 159.2 301.3 163.5 301.0 165.0"/>
<path fill="none" stroke="#000" stroke-width="1.1" stroke-linecap="round" d="M306.0 146.0 C306.3 147.7 307.7 152.6 308.0 156.0 C308.3 159.4 308.0 164.7 308.0 166.4"/>
<path fill="none" stroke="#000" stroke-width="1.1" stroke-linecap="round" d="M307.0 144.0 C307.8 145.0 310.7 147.8 312.0 150.0 C313.3 152.2 314.5 155.8 315.0 157.0"/>
<path fill="none" stroke="#000" stroke-width="1.1" stroke-linecap="round" d="M302.0 138.0 C302.5 138.8 303.7 142.8 305.0 143.0 C306.3 143.2 308.2 140.8 310.0 139.0 C311.8 137.2 315.0 133.2 316.0 132.0"/>
<path fill="none" stroke="#000" stroke-width="1.1" stroke-linecap="round" d="M295.0 144.0 C296.2 143.8 299.8 143.8 302.0 143.0 C304.2 142.2 307.0 139.7 308.0 139.0"/>
<path fill="#d2d2d2" d="M322.4 342.9 C322.4 342.1 334.4 344.3 340.8 343.3 C347.3 342.3 355.1 340.6 361.3 336.7 C367.4 332.9 373.7 327.2 377.6 320.4 C381.5 313.6 383.2 295.5 384.8 295.9 C386.3 296.2 388.0 315.3 386.8 322.4 C385.6 329.6 381.9 334.7 377.6 338.8 C373.4 342.9 367.4 345.4 361.3 347.0 C355.1 348.5 347.3 348.7 340.8 348.0 C334.4 347.3 322.4 343.7 322.4 342.9Z"/>
<path fill="#000" d="M263.2 272.4 L275.4 275.8 L289.7 276.1 L302.0 274.8 L316.3 272.4 L332.7 269.3 L347.0 263.2 L361.3 260.1 L371.5 261.1 L377.6 267.3 L380.7 279.5 L379.7 295.9 L375.6 310.2 L369.4 322.4 L361.3 332.7 L349.0 338.8 L332.7 340.8 L316.3 340.4 L302.0 338.8 L293.8 335.1 L291.8 329.6 L295.9 324.5 L289.7 316.3 L298.9 316.3 L289.7 313.2 L292.8 308.1 L285.7 304.0 L289.7 298.9 L283.6 295.9 L287.7 289.7 L290.8 281.6 L279.5 277.9 L263.2 274.4Z"/>
<path fill="#e2608b" d="M309.2 275.4 C311.5 274.2 317.8 275.3 322.4 274.4 C327.0 273.6 332.0 271.9 336.7 270.3 C341.5 268.8 347.0 266.2 351.1 265.2 C355.1 264.2 358.2 263.5 361.3 264.2 C364.3 264.9 367.4 266.4 369.4 269.3 C371.5 272.2 373.0 277.1 373.5 281.6 C374.0 286.0 373.4 291.1 372.5 295.9 C371.7 300.6 370.3 305.8 368.4 310.2 C366.6 314.6 363.8 318.9 361.3 322.4 C358.7 326.0 356.2 329.5 353.1 331.6 C350.0 333.8 347.0 334.7 342.9 335.1 C338.8 335.6 333.7 335.1 328.6 334.3 C323.5 333.5 316.5 332.1 312.2 330.2 C308.0 328.3 304.4 326.5 303.0 322.9 C301.7 319.2 303.4 313.0 304.0 308.1 C304.7 303.3 306.4 298.3 307.1 293.8 C307.9 289.4 308.2 284.6 308.5 281.6 C308.9 278.5 306.8 276.6 309.2 275.4Z"/>
<path fill="#cf3f5c" d="M309.2 275.4 C310.5 273.6 317.8 275.3 322.4 274.4 C327.0 273.6 332.0 271.9 336.7 270.3 C341.5 268.8 347.0 266.2 351.1 265.2 C355.1 264.2 358.2 263.5 361.3 264.2 C364.3 264.9 367.6 266.4 369.4 269.3 C371.3 272.2 373.0 278.3 372.5 281.6 C372.0 284.8 369.6 288.0 366.4 288.7 C363.1 289.4 357.4 286.8 353.1 285.7 C348.8 284.5 345.3 282.4 340.8 281.6 C336.4 280.7 331.0 279.9 326.5 280.5 C322.1 281.2 317.2 286.5 314.3 285.7 C311.4 284.8 307.8 277.3 309.2 275.4Z"/>
<path fill="#ff7685" d="M314.3 290.8 C316.7 287.4 322.1 287.0 326.5 285.7 C331.0 284.3 336.4 282.6 340.8 282.6 C345.3 282.6 349.7 284.3 353.1 285.7 C356.5 287.0 360.2 288.0 361.3 290.8 C362.4 293.5 360.8 298.8 359.6 302.0 C358.4 305.2 356.1 307.7 354.1 310.2 C352.2 312.6 350.9 315.3 348.0 316.7 C345.1 318.2 340.7 318.1 336.7 318.8 C332.8 319.4 327.9 321.2 324.5 320.8 C321.1 320.4 318.4 318.8 316.3 316.3 C314.3 313.9 312.6 310.4 312.2 306.1 C311.9 301.8 311.9 294.2 314.3 290.8Z"/>
<path fill="none" stroke="#d8506a" stroke-width="0.8" stroke-linecap="round" d="M326.5 285.7 C327.0 287.4 329.4 292.1 329.6 295.9 C329.8 299.6 327.0 304.2 327.6 308.1 C328.1 312.1 331.8 317.5 332.7 319.4"/>
<path fill="#f6f1b6" stroke="#8a875e" stroke-width="0.5" stroke-linejoin="round" d="M262.2 274.0 L275.4 275.4 L277.5 283.6 L280.5 295.9 L272.4 287.7 L266.2 279.5Z"/>
<path fill="#f6f1b6" stroke="#8a875e" stroke-width="0.5" stroke-linejoin="round" d="M309.2 275.4 L323.5 275.4 L324.5 285.7 L323.5 301.0 L316.3 289.7 L311.2 281.6Z"/>
<path fill="#f6f1b6" stroke="#8a875e" stroke-width="0.5" stroke-linejoin="round" d="M286.7 314.3 L292.8 318.4 L301.0 323.5 L310.2 325.5 L305.1 331.6 L295.9 328.6 L289.7 321.4Z"/>
<path fill="#f6f1b6" stroke="#8a875e" stroke-width="0.5" stroke-linejoin="round" d="M335.7 315.3 L338.8 322.4 L339.8 333.7 L328.6 334.7 L331.6 326.5Z"/>
<path fill="#f6f1b6" stroke="#8a875e" stroke-width="0.4" stroke-linejoin="round" d="M277.9 277.9 L304.0 276.3 L302.4 283.6 L300.4 279.1 L296.9 282.6 L293.8 279.1 L290.2 282.6 L287.3 279.5 L283.6 282.6 L280.5 279.5Z"/>
<path fill="#f6f1b6" stroke="#8a875e" stroke-width="0.4" stroke-linejoin="round" d="M304.0 327.6 L308.5 328.6 L314.3 329.8 L320.4 330.2 L326.5 329.8 L327.6 333.9 L305.1 332.7Z"/>
<path fill="#e9a0a2" d="M246.5 239.4 C247.5 237.6 250.8 236.8 254.2 236.8 C257.6 236.8 262.4 239.5 267.1 239.4 C271.8 239.2 280.9 235.4 282.6 236.0 C284.3 236.6 279.6 241.2 277.4 243.2 C275.3 245.3 271.6 246.2 269.7 248.4 C267.7 250.5 265.8 254.0 265.8 256.1 C265.8 258.3 270.3 260.0 269.7 261.3 C269.0 262.6 264.7 264.7 261.9 263.9 C259.1 263.0 255.3 258.9 252.9 256.1 C250.5 253.3 248.8 249.9 247.7 247.1 C246.7 244.3 245.4 241.1 246.5 239.4Z"/>
<path fill="#b85a63" d="M252.9 256.1 C253.1 254.4 258.9 252.7 261.9 253.5 C264.9 254.4 269.7 258.7 271.0 261.3 C272.3 263.9 271.4 268.6 269.7 269.0 C268.0 269.5 263.4 266.0 260.6 263.9 C257.8 261.7 252.7 257.8 252.9 256.1Z"/>
<path fill="#000" d="M264.5 253.5 C265.8 252.0 270.5 251.2 273.5 248.4 C276.6 245.6 281.5 236.8 282.6 236.8 C283.7 236.8 281.3 245.2 280.0 248.4 C278.7 251.6 275.3 254.0 274.8 256.1 C274.4 258.3 278.1 260.6 277.4 261.3 C276.8 261.9 272.9 260.6 271.0 260.0 C269.0 259.4 266.9 258.5 265.8 257.4 C264.7 256.3 263.2 255.1 264.5 253.5Z"/>
<path fill="none" stroke="#000" stroke-width="1.0" stroke-linecap="round" d="M355.0 262.0 C350.8 263.0 339.2 265.5 330.0 268.0 C320.8 270.5 309.0 275.2 300.0 277.0 C291.0 278.8 282.3 280.5 276.0 279.0 C269.7 277.5 264.3 269.8 262.0 268.0"/>
<path fill="none" stroke="#222" stroke-width="0.9" stroke-linecap="round" d="M285.0 262.0 C287.5 261.0 292.5 258.0 300.0 256.0 C307.5 254.0 320.0 252.7 330.0 250.0 C340.0 247.3 355.0 241.7 360.0 240.0"/>
<path fill="none" stroke="#222" stroke-width="0.7" stroke-linecap="round" stroke-dasharray="1.5 2" d="M305.0 266.0 C309.2 265.3 320.8 264.3 330.0 262.0 C339.2 259.7 352.3 254.7 360.0 252.0 C367.7 249.3 373.3 247.0 376.0 246.0"/>
<path fill="none" stroke="#7a2a08" stroke-width="2.2" stroke-linecap="round" d="M285.2 189.0 C289.0 188.8 302.4 186.7 308.4 187.7 C314.4 188.8 317.8 193.1 321.3 195.5 C324.7 197.8 327.7 200.9 329.0 201.9"/>
<path fill="none" stroke="#7a2a08" stroke-width="1.6" stroke-linecap="round" d="M289.0 195.5 C291.8 195.2 300.9 193.0 305.8 193.7 C310.8 194.3 315.1 197.5 318.7 199.4 C322.4 201.2 326.2 203.7 327.7 204.5"/>
<path fill="none" stroke="#7a2a08" stroke-width="1.3" stroke-linecap="round" d="M282.6 201.9 C286.0 201.4 296.8 198.6 303.2 198.8 C309.7 199.1 318.3 202.5 321.3 203.2"/>
<path fill="none" stroke="#7a2a08" stroke-width="1.1" stroke-linecap="round" d="M280.0 209.7 C283.0 209.0 292.5 206.2 298.1 205.8 C303.7 205.5 311.0 207.3 313.5 207.6"/>
<path fill="none" stroke="#7a2a08" stroke-width="1.4" stroke-linecap="round" d="M251.6 204.5 C251.0 206.7 248.2 212.7 247.7 217.4 C247.3 222.2 248.8 230.3 249.0 232.9"/>
<path fill="none" stroke="#7a2a08" stroke-width="1.2" stroke-linecap="round" d="M290.3 225.2 C289.7 226.5 288.6 230.8 286.5 232.9 C284.3 235.1 278.9 237.2 277.4 238.1"/>
<path fill="none" stroke="#7a2a08" stroke-width="1.2" stroke-linecap="round" d="M259.4 195.5 C261.5 194.8 268.0 192.4 272.3 191.6 C276.6 190.8 283.0 190.8 285.2 190.6"/>
<path fill="none" stroke="#aaa" stroke-width="1.6" stroke-linecap="round" d="M318.0 212.0 C323.3 208.3 338.0 197.0 350.0 190.0 C362.0 183.0 377.7 175.0 390.0 170.0 C402.3 165.0 418.3 161.7 424.0 160.0"/>
<path fill="none" stroke="#fff" stroke-width="1.1" stroke-linecap="round" d="M318.0 212.0 C323.3 208.3 338.0 197.0 350.0 190.0 C362.0 183.0 377.7 175.0 390.0 170.0 C402.3 165.0 418.3 161.7 424.0 160.0"/>
<path fill="none" stroke="#aaa" stroke-width="1.6" stroke-linecap="round" d="M322.0 215.0 C328.3 212.5 347.0 203.8 360.0 200.0 C373.0 196.2 389.3 193.7 400.0 192.0 C410.7 190.3 420.0 190.3 424.0 190.0"/>
<path fill="none" stroke="#fff" stroke-width="1.1" stroke-linecap="round" d="M322.0 215.0 C328.3 212.5 347.0 203.8 360.0 200.0 C373.0 196.2 389.3 193.7 400.0 192.0 C410.7 190.3 420.0 190.3 424.0 190.0"/>
<path fill="none" stroke="#aaa" stroke-width="1.6" stroke-linecap="round" d="M326.0 222.0 C332.5 220.7 351.8 215.0 365.0 214.0 C378.2 213.0 395.2 214.7 405.0 216.0 C414.8 217.3 420.8 221.0 424.0 222.0"/>
<path fill="none" stroke="#fff" stroke-width="1.1" stroke-linecap="round" d="M326.0 222.0 C332.5 220.7 351.8 215.0 365.0 214.0 C378.2 213.0 395.2 214.7 405.0 216.0 C414.8 217.3 420.8 221.0 424.0 222.0"/>
<path fill="none" stroke="#aaa" stroke-width="1.6" stroke-linecap="round" d="M330.0 232.0 C336.7 231.7 358.3 228.7 370.0 230.0 C381.7 231.3 391.0 236.3 400.0 240.0 C409.0 243.7 420.0 250.0 424.0 252.0"/>
<path fill="none" stroke="#fff" stroke-width="1.1" stroke-linecap="round" d="M330.0 232.0 C336.7 231.7 358.3 228.7 370.0 230.0 C381.7 231.3 391.0 236.3 400.0 240.0 C409.0 243.7 420.0 250.0 424.0 252.0"/>
<path fill="none" stroke="#aaa" stroke-width="1.6" stroke-linecap="round" d="M335.0 244.0 C340.8 245.0 359.2 246.7 370.0 250.0 C380.8 253.3 391.0 259.7 400.0 264.0 C409.0 268.3 420.0 274.0 424.0 276.0"/>
<path fill="none" stroke="#fff" stroke-width="1.1" stroke-linecap="round" d="M335.0 244.0 C340.8 245.0 359.2 246.7 370.0 250.0 C380.8 253.3 391.0 259.7 400.0 264.0 C409.0 268.3 420.0 274.0 424.0 276.0"/>
<path fill="none" stroke="#aaa" stroke-width="1.6" stroke-linecap="round" d="M340.0 254.0 C344.2 255.7 357.5 260.3 365.0 264.0 C372.5 267.7 379.5 272.3 385.0 276.0 C390.5 279.7 395.8 284.3 398.0 286.0"/>
<path fill="none" stroke="#fff" stroke-width="1.1" stroke-linecap="round" d="M340.0 254.0 C344.2 255.7 357.5 260.3 365.0 264.0 C372.5 267.7 379.5 272.3 385.0 276.0 C390.5 279.7 395.8 284.3 398.0 286.0"/>
<path fill="none" stroke="#aaa" stroke-width="1.6" stroke-linecap="round" d="M345.0 262.0 C347.5 263.7 355.5 268.3 360.0 272.0 C364.5 275.7 368.7 280.0 372.0 284.0 C375.3 288.0 378.7 294.0 380.0 296.0"/>
<path fill="none" stroke="#fff" stroke-width="1.1" stroke-linecap="round" d="M345.0 262.0 C347.5 263.7 355.5 268.3 360.0 272.0 C364.5 275.7 368.7 280.0 372.0 284.0 C375.3 288.0 378.7 294.0 380.0 296.0"/>
<path fill="none" stroke="#aaa" stroke-width="1.6" stroke-linecap="round" d="M300.0 252.0 C305.0 250.7 321.3 247.3 330.0 244.0 C338.7 240.7 348.3 234.0 352.0 232.0"/>
<path fill="none" stroke="#fff" stroke-width="1.1" stroke-linecap="round" d="M300.0 252.0 C305.0 250.7 321.3 247.3 330.0 244.0 C338.7 240.7 348.3 234.0 352.0 232.0"/>
<path fill="none" stroke="#a8a8a8" stroke-width="0.8" stroke-linecap="round" d="M245.2 225.2 C244.1 220.9 241.3 206.9 238.7 199.4 C236.1 191.8 231.2 183.2 229.7 180.0"/>
<path fill="none" stroke="#a8a8a8" stroke-width="0.8" stroke-linecap="round" d="M243.9 226.5 C242.2 222.8 238.1 211.0 233.5 204.5 C229.0 198.1 219.6 190.5 216.8 187.7"/>
<path fill="none" stroke="#a8a8a8" stroke-width="0.8" stroke-linecap="round" d="M242.6 229.0 C238.5 225.8 224.3 214.6 218.1 209.7 C211.8 204.7 207.3 201.1 205.2 199.4"/>
<path fill="none" stroke="#a8a8a8" stroke-width="0.8" stroke-linecap="round" d="M241.3 231.6 C237.8 229.7 227.1 222.8 220.6 220.0 C214.2 217.2 205.6 215.7 202.6 214.8"/>
<path fill="none" stroke="#a8a8a8" stroke-width="0.8" stroke-linecap="round" d="M241.3 235.5 C238.3 234.6 228.8 231.2 223.2 230.3 C217.6 229.5 210.3 230.3 207.7 230.3"/>
<path fill="none" stroke="#a8a8a8" stroke-width="0.8" stroke-linecap="round" d="M242.6 239.4 C239.8 239.4 231.2 238.7 225.8 239.4 C220.4 240.0 212.9 242.6 210.3 243.2"/>
<path fill="none" stroke="#a8a8a8" stroke-width="0.8" stroke-linecap="round" d="M243.9 243.2 C240.9 244.1 231.8 246.7 225.8 248.4 C219.8 250.1 210.8 252.7 207.7 253.5"/>
<path fill="none" stroke="#a8a8a8" stroke-width="0.8" stroke-linecap="round" d="M238.7 222.6 C239.1 219.1 241.1 208.0 241.3 201.9 C241.5 195.9 240.2 189.0 240.0 186.5"/>
<path fill="none" stroke="#a8a8a8" stroke-width="0.8" stroke-linecap="round" d="M245.2 245.8 C243.2 247.3 237.0 252.5 233.5 254.8 C230.1 257.2 226.0 259.1 224.5 260.0"/>
<path fill="none" stroke="#cfcfcf" stroke-width="1.0" stroke-linecap="round" d="M305.2 359.5 C305.0 361.3 304.3 368.3 304.1 370.1"/>
<path fill="none" stroke="#cfcfcf" stroke-width="1.0" stroke-linecap="round" d="M338.2 337.9 C338.2 340.0 338.3 348.0 338.3 350.0"/>
<path fill="none" stroke="#cfcfcf" stroke-width="1.0" stroke-linecap="round" d="M307.0 345.5 C307.1 347.2 307.2 353.7 307.3 355.4"/>
<path fill="none" stroke="#cfcfcf" stroke-width="1.0" stroke-linecap="round" d="M356.1 356.4 C356.5 357.8 358.1 363.0 358.5 364.3"/>
<path fill="none" stroke="#cfcfcf" stroke-width="1.0" stroke-linecap="round" d="M339.0 374.1 C339.2 376.0 339.9 383.6 340.1 385.5"/>
<path fill="none" stroke="#cfcfcf" stroke-width="1.0" stroke-linecap="round" d="M342.1 337.9 C342.4 339.6 343.6 346.7 343.9 348.4"/>
<path fill="none" stroke="#cfcfcf" stroke-width="1.0" stroke-linecap="round" d="M310.6 336.4 C310.6 338.0 310.7 344.6 310.8 346.2"/>
<path fill="none" stroke="#cfcfcf" stroke-width="1.0" stroke-linecap="round" d="M346.1 374.5 C346.4 376.6 347.8 385.0 348.1 387.1"/>
<path fill="none" stroke="#cfcfcf" stroke-width="1.0" stroke-linecap="round" d="M318.6 371.0 C318.5 373.1 318.4 381.6 318.4 383.7"/>
<path fill="none" stroke="#cfcfcf" stroke-width="1.0" stroke-linecap="round" d="M359.7 339.4 C360.0 340.8 361.1 346.3 361.4 347.7"/>
<path fill="none" stroke="#cfcfcf" stroke-width="1.0" stroke-linecap="round" d="M367.1 354.6 C367.6 356.1 369.6 362.0 370.1 363.4"/>
<path fill="none" stroke="#cfcfcf" stroke-width="1.0" stroke-linecap="round" d="M328.1 352.4 C328.1 354.1 328.3 361.1 328.3 362.9"/>
<path fill="none" stroke="#cfcfcf" stroke-width="1.0" stroke-linecap="round" d="M334.7 375.7 C334.9 377.8 335.7 386.2 335.9 388.3"/>
<path fill="none" stroke="#cfcfcf" stroke-width="1.0" stroke-linecap="round" d="M357.8 379.6 C358.2 380.9 360.0 386.2 360.4 387.6"/>
<path fill="none" stroke="#cfcfcf" stroke-width="1.0" stroke-linecap="round" d="M358.2 378.4 C358.7 380.1 360.7 387.1 361.3 388.8"/>
<path fill="none" stroke="#cfcfcf" stroke-width="1.0" stroke-linecap="round" d="M345.7 344.5 C346.0 346.2 347.5 353.2 347.9 354.9"/>
<path fill="none" stroke="#cfcfcf" stroke-width="1.0" stroke-linecap="round" d="M309.2 337.9 C309.2 340.0 309.3 348.6 309.3 350.8"/>
<path fill="none" stroke="#cfcfcf" stroke-width="1.0" stroke-linecap="round" d="M292.5 371.0 C292.2 372.3 291.0 377.6 290.7 378.9"/>
<path fill="none" stroke="#cfcfcf" stroke-width="1.0" stroke-linecap="round" d="M310.0 369.6 C310.0 370.8 310.1 375.6 310.1 376.9"/>
<path fill="none" stroke="#cfcfcf" stroke-width="1.0" stroke-linecap="round" d="M337.2 337.0 C337.5 338.5 338.5 344.5 338.7 346.0"/>
<path fill="none" stroke="#cfcfcf" stroke-width="1.0" stroke-linecap="round" d="M359.9 379.1 C360.3 381.3 361.9 390.0 362.3 392.1"/>
<path fill="none" stroke="#cfcfcf" stroke-width="1.0" stroke-linecap="round" d="M311.3 338.5 C311.3 339.7 311.1 344.5 311.0 345.7"/>
<path fill="none" stroke="#cfcfcf" stroke-width="1.0" stroke-linecap="round" d="M301.8 353.4 C301.6 354.7 301.1 360.0 300.9 361.3"/>
<path fill="none" stroke="#cfcfcf" stroke-width="1.0" stroke-linecap="round" d="M288.6 374.1 C288.2 376.2 286.7 384.7 286.4 386.8"/>
<path fill="none" stroke="#cfcfcf" stroke-width="1.0" stroke-linecap="round" d="M361.2 352.0 C361.6 353.7 363.2 360.4 363.6 362.1"/>
<path fill="none" stroke="#cfcfcf" stroke-width="1.0" stroke-linecap="round" d="M339.7 361.8 C339.9 363.6 340.8 370.7 341.0 372.5"/>
<path fill="none" stroke="#cfcfcf" stroke-width="1.0" stroke-linecap="round" d="M365.0 357.8 C365.4 359.7 367.1 367.3 367.5 369.1"/>
<path fill="none" stroke="#cfcfcf" stroke-width="1.0" stroke-linecap="round" d="M305.2 348.5 C305.2 350.2 305.3 357.0 305.3 358.7"/>
<path fill="none" stroke="#cfcfcf" stroke-width="1.0" stroke-linecap="round" d="M331.6 335.5 C331.7 337.3 332.1 344.2 332.1 346.0"/>
<path fill="none" stroke="#cfcfcf" stroke-width="1.0" stroke-linecap="round" d="M286.7 362.7 C286.4 363.9 285.3 368.8 285.0 370.1"/>
<path fill="none" stroke="#cfcfcf" stroke-width="1.0" stroke-linecap="round" d="M338.3 356.0 C338.6 357.5 339.5 363.6 339.8 365.1"/>
<path fill="none" stroke="#cfcfcf" stroke-width="1.0" stroke-linecap="round" d="M345.1 368.2 C345.2 369.4 345.5 374.3 345.6 375.6"/>
<path fill="none" stroke="#cfcfcf" stroke-width="1.0" stroke-linecap="round" d="M342.5 378.3 C342.6 380.0 343.2 386.5 343.3 388.1"/>
<path fill="none" stroke="#cfcfcf" stroke-width="1.0" stroke-linecap="round" d="M335.4 349.4 C335.5 350.9 335.9 356.8 336.0 358.3"/>
<path fill="none" stroke="#cfcfcf" stroke-width="1.0" stroke-linecap="round" d="M316.4 361.8 C316.3 363.3 315.9 369.5 315.8 371.1"/>
<path fill="none" stroke="#cfcfcf" stroke-width="1.0" stroke-linecap="round" d="M350.6 336.2 C351.0 338.1 352.3 345.7 352.6 347.6"/>
<path fill="none" stroke="#cfcfcf" stroke-width="1.0" stroke-linecap="round" d="M311.4 345.0 C311.4 346.4 311.4 352.0 311.4 353.4"/>
<path fill="none" stroke="#cfcfcf" stroke-width="1.0" stroke-linecap="round" d="M300.9 354.6 C300.8 355.9 300.3 360.9 300.2 362.2"/>
<path fill="none" stroke="#cfcfcf" stroke-width="1.0" stroke-linecap="round" d="M312.4 350.0 C312.4 351.6 312.5 358.0 312.6 359.6"/>
<path fill="none" stroke="#cfcfcf" stroke-width="1.0" stroke-linecap="round" d="M357.7 342.6 C358.0 344.4 359.3 351.7 359.7 353.5"/>
<path fill="#000" d="M425.0 90.0 C427.0 88.7 435.5 94.2 440.0 100.0 C444.5 105.8 449.0 115.0 452.0 125.0 C455.0 135.0 457.3 147.5 458.0 160.0 C458.7 172.5 457.3 187.5 456.0 200.0 C454.7 212.5 451.7 223.3 450.0 235.0 C448.3 246.7 447.7 262.5 446.0 270.0 C444.3 277.5 440.8 285.8 440.0 280.0 C439.2 274.2 440.0 249.2 441.0 235.0 C442.0 220.8 445.2 207.5 446.0 195.0 C446.8 182.5 447.0 171.2 446.0 160.0 C445.0 148.8 443.0 136.7 440.0 128.0 C437.0 119.3 430.5 114.3 428.0 108.0 C425.5 101.7 423.0 91.3 425.0 90.0Z"/>
<path fill="#000" d="M440.0 80.0 C441.7 79.3 453.0 86.2 458.0 92.0 C463.0 97.8 467.0 105.3 470.0 115.0 C473.0 124.7 475.0 137.5 476.0 150.0 C477.0 162.5 477.0 177.5 476.0 190.0 C475.0 202.5 471.7 215.0 470.0 225.0 C468.3 235.0 467.3 250.0 466.0 250.0 C464.7 250.0 462.0 235.0 462.0 225.0 C462.0 215.0 465.3 202.5 466.0 190.0 C466.7 177.5 467.0 162.0 466.0 150.0 C465.0 138.0 463.0 127.0 460.0 118.0 C457.0 109.0 451.3 102.3 448.0 96.0 C444.7 89.7 438.3 80.7 440.0 80.0Z"/>
<path fill="#000" d="M462.0 90.0 C463.0 88.8 473.7 98.3 478.0 105.0 C482.3 111.7 485.7 120.0 488.0 130.0 C490.3 140.0 491.7 152.5 492.0 165.0 C492.3 177.5 491.3 194.2 490.0 205.0 C488.7 215.8 485.2 230.8 484.0 230.0 C482.8 229.2 483.0 210.8 483.0 200.0 C483.0 189.2 484.5 175.8 484.0 165.0 C483.5 154.2 482.0 143.8 480.0 135.0 C478.0 126.2 475.0 119.5 472.0 112.0 C469.0 104.5 461.0 91.2 462.0 90.0Z"/>
<path fill="#000" d="M428.0 140.0 C429.3 139.2 435.0 158.3 436.0 170.0 C437.0 181.7 435.3 198.3 434.0 210.0 C432.7 221.7 429.3 240.0 428.0 240.0 C426.7 240.0 426.0 220.8 426.0 210.0 C426.0 199.2 427.7 186.7 428.0 175.0 C428.3 163.3 426.7 140.8 428.0 140.0Z"/>
<path fill="#000" d="M470.0 240.0 C471.7 233.5 477.3 232.3 480.0 236.0 C482.7 239.7 486.3 253.0 486.0 262.0 C485.7 271.0 480.7 287.8 478.0 290.0 C475.3 292.2 471.3 283.3 470.0 275.0 C468.7 266.7 468.3 246.5 470.0 240.0Z"/>
<path fill="#000" d="M492.0 225.0 C493.3 221.2 498.7 225.8 500.0 232.0 C501.3 238.2 501.0 254.0 500.0 262.0 C499.0 270.0 495.3 281.2 494.0 280.0 C492.7 278.8 492.3 264.2 492.0 255.0 C491.7 245.8 490.7 228.8 492.0 225.0Z"/>
<path fill="#000" d="M452.0 78.0 C452.3 74.0 458.0 70.0 462.0 68.0 C466.0 66.0 472.3 64.7 476.0 66.0 C479.7 67.3 482.3 71.0 484.0 76.0 C485.7 81.0 486.7 90.0 486.0 96.0 C485.3 102.0 482.7 110.7 480.0 112.0 C477.3 113.3 473.3 107.3 470.0 104.0 C466.7 100.7 463.0 96.3 460.0 92.0 C457.0 87.7 451.7 82.0 452.0 78.0Z"/>
<path fill="#fff" d="M460.0 80.0 C460.0 76.0 465.3 73.3 468.0 72.0 C470.7 70.7 474.0 70.3 476.0 72.0 C478.0 73.7 479.3 77.7 480.0 82.0 C480.7 86.3 480.7 94.3 480.0 98.0 C479.3 101.7 478.0 104.3 476.0 104.0 C474.0 103.7 470.7 100.0 468.0 96.0 C465.3 92.0 460.0 84.0 460.0 80.0Z"/>
</g>
</svg>
  </div>

  <!-- FLOATING TOOLBAR -->
  <div class="abs ftb" style="left:322px;top:39px"></div>
  <div class="abs ftb" style="left:363px;top:39px"></div>
  <svg class="abs" style="left:322px;top:39px" width="80" height="21" viewBox="0 0 80 21" fill="none" stroke="#8d9092" stroke-width="1.3">
    <path d="M9.5 6.5H6v8h3.5M10.8 4.5v12" /><path d="M12 6.5h2.5v8H12" stroke-dasharray="1.3 1.3"/>
    <path d="M24.5 9V6h7v3M22.5 10.7h11" /><path d="M24.5 12.5v3h7v-3" stroke-dasharray="1.3 1.3"/>
    <path d="M45.5 6h10M50.5 6v8M47.5 11.5l3 3.2 3-3.2" stroke="#c9cbcc" stroke-width="1.5"/><path d="M45 9.5h3.5M52.5 9.5H56" stroke="#c9cbcc" stroke-dasharray="1.2 1"/>
    <path d="M64.5 15h9M69 15V7M67 9l2-2.2L71 9M65 11.5h2.5M71 11.5h2.5" stroke="#6d7173"/>
  </svg>

  <!-- COLOR POPUP -->
  <div id="popup" class="abs">
    <div class="abs" id="sv"></div>
    <div class="abs" style="left:101px;top:28px;width:8px;height:8px;border:1.3px solid #e9b8ee;border-radius:50%"></div>
    <div class="abs" id="hue"></div>
    <div class="abs" style="left:135px;top:109.5px;width:14px;height:8.5px;border:2px solid #dba6e3;border-radius:2.5px;background:#c32bd0"></div>
    <div class="abs" style="left:7px;top:145.5px;width:138px;height:6px;background:#4b4f51;border-radius:2px;border-top:1px solid #3a3d3f"></div>
    <div class="abs" style="left:142.5px;top:144px;width:9px;height:9px;background:#7b7e80;border-radius:50%"></div>
    <div class="lbl" style="left:9px;top:157.5px;font-size:6px">Opacity</div>
    <div class="abs" style="left:120px;top:153px;font-size:7.5px;color:#a9abac">100%</div>
    <div class="abs" style="left:0;top:172px;width:154px;height:1px;background:#1b1d1e"></div>
    <div class="abs" style="left:7px;top:180.5px;width:93px;height:17px;background:#c9cbcc;color:#333;font-size:7.5px;font-weight:bold;line-height:17px;padding-left:5px;color:#222"><span style="display:inline-block;transform:scaleX(.82);transform-origin:0 50%">#bf27cc</span></div>
    <div class="abs" style="left:100px;top:180.5px;width:18.5px;height:17px;background:#44484a;border-radius:0 2px 2px 0"></div>
    <svg class="abs" style="left:103px;top:184px" width="12" height="10" viewBox="0 0 12 10"><path d="M2.5 3.2L6 6.7l3.5-3.5" fill="none" stroke="#d5d6d7" stroke-width="1.5"/></svg>
    <div class="abs" style="left:125.5px;top:180.5px;width:21.5px;height:17px;background:#44484a;border-radius:2px"></div>
    <svg class="abs" style="left:130px;top:183px" width="13" height="12" viewBox="0 0 13 12"><path d="M2 10l1-2.6 3.8-3.8 1.7 1.7L4.7 9.1z" fill="#cfd1d2"/><path d="M6.2 3l3.9 3.9" stroke="#cfd1d2" stroke-width="1.4"/><path d="M7.6 3.6l1.7-1.7a1.2 1.2 0 0 1 1.8 1.8L9.4 5.4z" fill="#cfd1d2"/></svg>
    <div class="abs" style="left:0;top:204px;width:154px;height:1px;background:#1b1d1e"></div>
    <div class="lbl" style="left:8px;top:213.5px;font-size:6px">Recently Used</div>
  </div>
  <div class="abs" style="left:577.700px;top:16px;width:2.300px;height:449px;background:#141617;z-index:6"></div>
  <div id="vscroll" class="abs"><div class="abs" style="left:0;top:22px;width:5px;height:390px;background:#383b3d"></div></div>
  <div id="hscroll" class="abs"><div class="abs" style="left:162px;top:2px;width:71px;height:3px;background:#565a5c;border-radius:1.500px 1.500px 0 0"></div></div>

  <!-- RIGHT PANEL -->
  <div id="right" class="abs">
    <div class="abs" style="left:0;top:0;width:196px;height:41px;background:#222527"></div>
    <div class="abs tbtn" style="left:8.5px"></div>
    <div class="abs tbtn" style="left:43.5px"></div>
    <div class="abs tbtn" style="left:77.5px"></div>
    <div class="abs tbtn" style="left:125px"></div>
    <div class="abs tbtn" style="left:160px"></div>
    <svg class="abs" style="left:0;top:0" width="196" height="40" viewBox="0 0 196 40" fill="none" stroke="#d2d4d5" stroke-width="1.3">
      <!-- grid + magnet -->
      <path d="M15 16.5h14M15 22h14M19 13v14M25 13v14" stroke-width="1.2"/>
      <rect x="20.5" y="20.700" width="9.500" height="7.300" fill="#3a3e40" stroke="none"/>
      <path d="M22.500 27.300v-2.300a3 3 0 0 1 6 0v2.300" stroke-width="2.100"/>
      <!-- page gear -->
      <path d="M56.5 13.5h-5.2l-2.8 2.8v10.2h6M51.3 13.5v2.8h-2.8M56.5 13.5h3v4"/>
      <circle cx="60" cy="23" r="2.6"/><path d="M60 19v1M60 26v1M56 23h1M63 23h1M57.2 20.2l.7.7M62.1 25.1l.7.7M62.8 20.2l-.7.7M57.9 25.1l-.7.7" stroke-width="1.1"/>
      <!-- export -->
      <path d="M88 19.5h-3v7.5h13v-7.5h-3M91.5 23v-10M88 16l3.5-3.5L95 16"/>
      <!-- page plus -->
      <path d="M143 13.500h-5.200l-2.800 2.800v10.200h6M137.800 13.500v2.800h-2.800M143 13.500h3v4"/>
      <circle cx="146" cy="23.500" r="3"/><path d="M144.300 23.500h3.400M146 21.800v3.400" stroke-width="1"/>
      <!-- info -->
      <circle cx="174" cy="19.500" r="6.300" stroke-width="1.400"/><path d="M174 18.500v4.700" stroke-width="1.600"/><circle cx="174" cy="16" r=".9" fill="#d2d4d5" stroke="none"/>
    </svg>
    <div class="abs hdr" style="top:41px"><div class="t">Background</div><div class="sep"></div><div class="plus"></div></div>
    <div class="abs body" style="top:64px;height:39px">
      <div class="abs sw" style="left:8px;top:7px;width:20px;height:18px"></div>
      <svg class="abs" style="left:10px;top:9px" width="16" height="14" viewBox="0 0 16 14"><rect width="16" height="14" fill="#8f8f8f"/><use href="#tg" transform="translate(-7.200 -2.800) scale(.044)"/></svg>
      <div class="abs sel" style="left:36px;top:7px;width:134px;height:18px">Image</div>
      <div class="abs chk on" style="left:178px;top:11px"></div>
      <div class="lbl" style="left:35px;top:27px">Type</div>
    </div>

    <div class="abs hdr" style="top:114px"><div class="t">Border</div><div class="sep"></div><div class="plus"></div></div>
    <div class="abs body" style="top:137px;height:41px">
      <div class="abs sw" style="left:7px;top:7px;width:22px;height:19px"></div>
      <div class="abs" style="left:10px;top:10px;width:16px;height:13px;background:#c627d3"></div>
      <div class="abs inp" style="left:36px;top:7px;width:43px;height:18px">1px</div>
      <div class="abs sel" style="left:86px;top:7px;width:84px;height:18px">Center</div>
      <div class="abs chk on" style="left:178px;top:11px"></div>
      <div class="lbl" style="left:35px;top:28px">Size</div>
      <div class="lbl" style="left:85px;top:27px">Position</div>
    </div>

    <div class="abs hdr" style="top:188px"><div class="t">Shadow</div><div class="sep"></div><div class="plus"></div></div>
    <div class="abs body" style="top:211px;height:42px">
      <div class="abs sw" style="left:8px;top:8px;width:21px;height:17px"></div>
      <div class="abs inp dis" style="left:36px;top:8px;width:28px;height:18px">1px</div>
      <div class="abs inp dis" style="left:71px;top:8px;width:28px;height:18px">1px</div>
      <div class="abs inp dis" style="left:107px;top:8px;width:28px;height:18px">1px</div>
      <div class="abs inp dis" style="left:142px;top:8px;width:28px;height:18px">1px</div>
      <div class="abs chk" style="left:178px;top:11px"></div>
      <div class="lbl" style="left:35px;top:28px;color:#8e9092">Offset X</div>
      <div class="lbl" style="left:70px;top:28px;color:#8e9092">Offset Y</div>
      <div class="lbl" style="left:106px;top:28px;color:#8e9092">Blur</div>
      <div class="lbl" style="left:141px;top:28px;color:#8e9092">Spread</div>
    </div>

    <div class="abs hdr" style="top:263px"><div class="t">Inset Shadow</div><div class="sep"></div><div class="plus"></div></div>
    <div class="abs body" style="top:286px;height:42px">
      <div class="abs sw" style="left:8px;top:8px;width:21px;height:17px"></div>
      <div class="abs inp dis" style="left:36px;top:8px;width:28px;height:18px">1px</div>
      <div class="abs inp dis" style="left:71px;top:8px;width:28px;height:18px">1px</div>
      <div class="abs inp dis" style="left:107px;top:8px;width:28px;height:18px">1px</div>
      <div class="abs inp dis" style="left:142px;top:8px;width:28px;height:18px">1px</div>
      <div class="abs chk" style="left:178px;top:11px"></div>
      <div class="lbl" style="left:35px;top:28px;color:#8e9092">Offset X</div>
      <div class="lbl" style="left:70px;top:28px;color:#8e9092">Offset Y</div>
      <div class="lbl" style="left:106px;top:28px;color:#8e9092">Blur</div>
      <div class="lbl" style="left:141px;top:28px;color:#8e9092">Spread</div>
    </div>

    <div class="abs hdr" style="top:337px"><div class="t">Opacity</div></div>
    <div class="abs body" style="top:360px;height:33px">
      <div class="abs" style="left:10px;top:9px;width:156px;height:6px;background:#4b4f51;border-radius:2px;border-top:1px solid #3a3d3f"></div>
      <div class="abs" style="left:162.500px;top:7.500px;width:9px;height:9px;background:#7b7e80;border-radius:50%"></div>
      <div class="abs chk on" style="left:178px;top:11px"></div>
      <div class="lbl" style="left:12px;top:21.5px;font-size:6px">Opacity</div>
      <div class="abs" style="left:141px;top:17px;font-size:7.500px;color:#a9abac">100%</div>
    </div>
    <div class="abs" style="left:0;top:417px;width:196px;height:32px;background:#232628;border-top:1px solid #141617"></div>
    <div class="abs" style="left:6.500px;top:425px;width:69.500px;height:18.500px;background:#3b3f41;border-radius:2px"></div>
    <div class="abs" style="left:22.500px;top:428px;width:1px;height:13px;background:#2c2f31"></div>
    <div class="abs" style="left:59px;top:428px;width:1px;height:13px;background:#2c2f31"></div>
    <div class="abs" style="left:12px;top:433.500px;width:4px;height:1.500px;background:#1c1e20"></div>
    <div class="abs" style="left:65px;top:433.500px;width:7px;height:1.500px;background:#1c1e20"></div>
    <div class="abs" style="left:67.750px;top:430.700px;width:1.500px;height:7px;background:#1c1e20"></div>
    <div class="abs" style="left:23px;top:430px;width:36px;text-align:center;font-size:7px;font-weight:bold;color:#b9bbbc">81%</div>

  </div>

  <div class="abs" style="left:718.500px;top:407.500px;width:44px;height:44px;border-radius:50%;background:#2c98f0"></div>
  <svg class="abs" style="left:718.500px;top:407.500px" width="44" height="44" viewBox="0 0 44 44"><path d="M14.500 12h15a3 3 0 0 1 3 3v18.500l-4-3h-14a3 3 0 0 1-3-3v-12.500a3 3 0 0 1 3-3z" fill="#fff"/><path d="M15.500 23.500q6.500 4 13 0" fill="none" stroke="#2c98f0" stroke-width="1.600" stroke-linecap="round"/></svg>
</div>
</body>
</html>
